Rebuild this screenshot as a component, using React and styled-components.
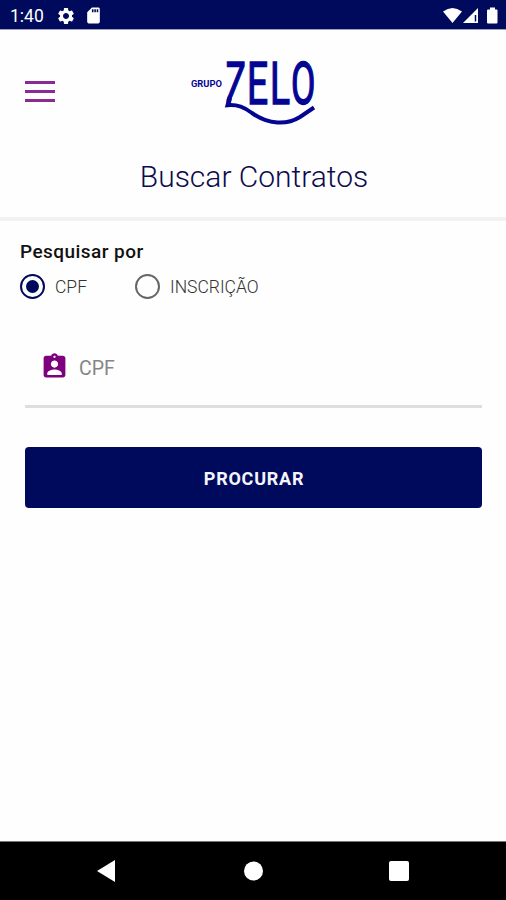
import React, { useState } from 'react';
import styled, { createGlobalStyle } from 'styled-components';
import { MdSettings, MdSdCard, MdAssignmentInd } from 'react-icons/md';

const GlobalStyle = createGlobalStyle`
  * {
    box-sizing: border-box;
  }
  body {
    margin: 0;
    background: #fefefe;
    font-family: Roboto, sans-serif;
  }
`;

const Screen = styled.div`
  display: flex;
  flex-direction: column;
  width: 506px;
  height: 900px;
  overflow: hidden;
`;

const StatusBar = styled.div`
  display: flex;
  align-items: center;
  justify-content: space-between;
  height: 30px;
  padding: 2px 7px 0 10px;
  background: #000a5c;
  border-bottom: 1px solid #9c9fc0;
  color: #fff;
`;

const StatusGroup = styled.div`
  display: flex;
  align-items: center;
`;

const Clock = styled.span`
  width: 46px;
  font-size: 17.5px;
  line-height: 20px;
`;

const StatusIcon = styled.span`
  display: flex;
  margin-right: ${props => props.$gap || 0}px;
`;

const Header = styled.header`
  display: flex;
  flex-direction: column;
  height: 191px;
  border-bottom: 4px solid #f2f2f2;
`;

const TopRow = styled.div`
  display: grid;
  grid-template-columns: 190px 126px 1fr;
  height: 102px;
  padding-top: 28px;
`;

const MenuButton = styled.button`
  display: flex;
  flex-direction: column;
  gap: 6px;
  width: 30px;
  height: 21px;
  margin: 23px 0 0 25px;
  padding: 0;
  border: 0;
  background: none;
`;

const MenuLine = styled.span`
  height: 3px;
  background: #8a2b91;
`;

const LogoSvg = styled.svg`
  overflow: visible;
  fill: #050594;
`;

const Title = styled.h1`
  margin: 27px 0 0;
  padding-left: 2px;
  color: #0c0b4e;
  font-size: 30px;
  font-weight: 300;
  line-height: 36px;
  text-align: center;
`;

const Content = styled.main`
  flex: 1;
  display: flex;
  flex-direction: column;
  padding: 19px 24px 0 25px;
`;

const Label = styled.div`
  margin-left: -5px;
  color: #111;
  font-size: 19px;
  font-weight: 500;
  line-height: 24px;
  letter-spacing: 0.45px;
`;

const RadioGroup = styled.div`
  display: flex;
  gap: 48px;
  margin: 9px 0 0 -5px;
`;

const RadioOption = styled.label`
  display: flex;
  align-items: center;
  gap: 10px;
  height: 26px;
  color: #333;
  font-size: 17.5px;
  font-weight: 300;
  line-height: 22px;
`;

const RadioText = styled.span`
  padding-top: 2px;
`;

const Radio = styled.input`
  appearance: none;
  width: 25px;
  height: 25px;
  margin: 0;
  padding: 4px;
  border: 2px solid #666;
  border-radius: 50%;

  &:checked {
    border-color: #000a5c;
    background: #000a5c content-box;
  }
`;

const Field = styled.div`
  display: flex;
  align-items: center;
  gap: 10px;
  height: 80px;
  margin-top: 29px;
  padding-left: 15px;
  border-bottom: 3px solid #dedede;
  color: #7b017e;
`;

const Input = styled.input`
  flex: 1;
  min-width: 0;
  padding: 3px 0 0;
  border: 0;
  outline: 0;
  background: none;
  font-family: inherit;
  font-size: 19.5px;
  color: #333;

  &::placeholder {
    color: #858585;
    opacity: 1;
  }
`;

const SubmitButton = styled.button`
  height: 61px;
  margin-top: 39px;
  padding: 2px 0 0 1px;
  border: 0;
  border-radius: 4px;
  background: #000a5c;
  color: #f4f4fa;
  font-family: inherit;
  font-size: 18px;
  font-weight: 700;
  letter-spacing: 0.75px;
`;

const NavBar = styled.nav`
  display: flex;
  align-items: center;
  justify-content: space-between;
  height: 59px;
  padding: 0 97px 0 97px;
  border-top: 1px solid #777;
  background: #000;
`;

const Logo = () => (
  <LogoSvg width="126" height="72" viewBox="190 58 126 72">
    <text x="191" y="86.5" fontSize="9.5" fontWeight="700" textLength="31" lengthAdjust="spacingAndGlyphs">GRUPO</text>
    <g stroke="#050594" strokeWidth="1.5" fontSize="59">
      <text transform="translate(225.5 104) scale(.58 1)">Z</text>
      <text transform="translate(247 104) scale(.63 1)">E</text>
      <text transform="translate(270 104) scale(.63 1)">L</text>
      <text transform="translate(291 104) scale(.6 1)">O</text>
    </g>
    {/* the Z has no foot, its diagonal runs into the wave */}
    <path d="M232.5 97H247.5V106H230Z" fill="#fefefe" />
    <path d="M230 96L227.5 105.2C238 104.5 244 107 252 113C269 125 287 125 300 117L314 107.5" fill="none" stroke="#050594" strokeWidth="4" />
  </LogoSvg>
);

const SignalIcons = () => (
  <svg width="56" height="18" viewBox="0 0 56 18" fill="#fff">
    <path d="M0 4.5Q9.5-2.5 19 4.5L9.5 16Z" />
    <path d="M35 1V16H20Z" />
    <path d="M32.5 8V14.5" stroke="#000a5c" strokeWidth="1.5" />
    <path d="M44 3.5Q44 2.5 45 2.5H47V.5H52V2.5H53.5Q54.5 2.5 54.5 3.5V15.5Q54.5 16.5 53.5 16.5H45Q44 16.5 44 15.5Z" />
  </svg>
);

const options = ['CPF', 'INSCRIÇÃO'];

const App = () => {
  const [selected, setSelected] = useState('CPF');

  return (
    <Screen>
      <GlobalStyle />
      <StatusBar>
        <StatusGroup>
          <Clock>1:40</Clock>
          <StatusIcon $gap={8}><MdSettings size={20} /></StatusIcon>
          <StatusIcon><MdSdCard size={19} /></StatusIcon>
        </StatusGroup>
        <SignalIcons />
      </StatusBar>
      <Header>
        <TopRow>
          <MenuButton aria-label="Menu">
            <MenuLine />
            <MenuLine />
            <MenuLine />
          </MenuButton>
          <Logo />
        </TopRow>
        <Title>Buscar Contratos</Title>
      </Header>
      <Content>
        <Label>Pesquisar por</Label>
        <RadioGroup>
          {options.map(option => (
            <RadioOption key={option}>
              <Radio
                type="radio"
                name="tipo"
                checked={selected === option}
                onChange={() => setSelected(option)}
              />
              <RadioText>{option}</RadioText>
            </RadioOption>
          ))}
        </RadioGroup>
        <Field>
          <MdAssignmentInd size={29} />
          <Input placeholder={selected} />
        </Field>
        <SubmitButton>PROCURAR</SubmitButton>
      </Content>
      <NavBar>
        <svg width="19" height="22" viewBox="0 0 19 22" fill="#fff">
          <path d="M0 11L18 0V22Z" />
        </svg>
        <svg width="20" height="20" viewBox="0 0 20 20" fill="#fff">
          <circle cx="10.5" cy="10" r="9.5" />
        </svg>
        <svg width="20" height="20" viewBox="0 0 20 20" fill="#fff">
          <rect width="20" height="20" rx="2" />
        </svg>
      </NavBar>
    </Screen>
  );
};

export default App;
